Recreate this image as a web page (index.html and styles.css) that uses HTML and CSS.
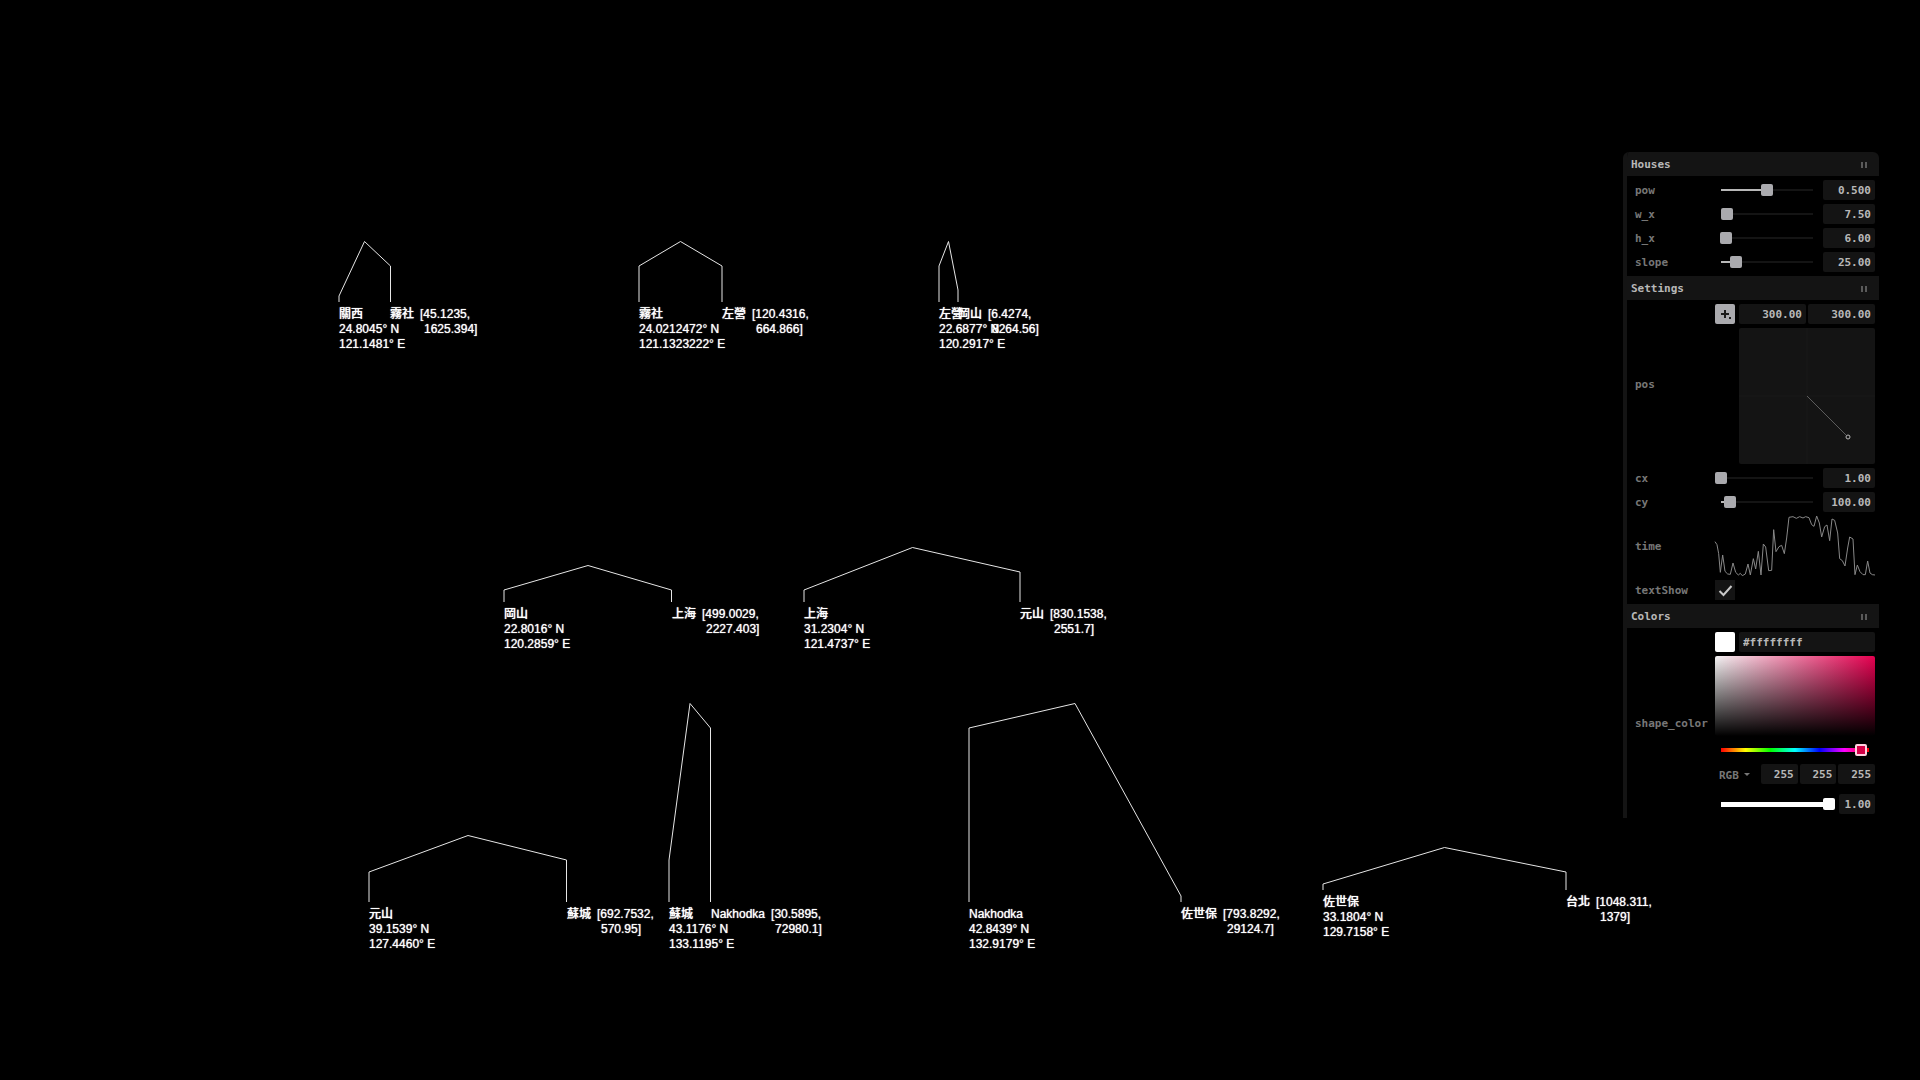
FILE: index.html
```html
<!DOCTYPE html>
<html lang="zh-Hant">
<head>
<meta charset="utf-8">
<title>Houses</title>
<meta name="viewport" content="width=device-width, initial-scale=1">
<link rel="stylesheet" href="styles.css">
</head>
<body>
<main class="stage">
  <section class="house" style="--x:339px;--y:302px;--span:51px">
    <svg class="outline"><polyline points="0,0 0,-6 25.5,-60.5 51.5,-36 51.5,0"/></svg>
    <p class="start">關西<br>24.8045° N<br>121.1481° E</p>
    <div class="end"><span>霧社</span><span class="size">[45.1235,<br>1625.394]</span></div>
  </section>
  <section class="house" style="--x:639px;--y:302px;--span:83px">
    <svg class="outline"><polyline points="0,0 0,-36 41.5,-60.5 83,-36 83,0"/></svg>
    <p class="start">霧社<br>24.0212472° N<br>121.1323222° E</p>
    <div class="end"><span>左營</span><span class="size">[120.4316,<br>664.866]</span></div>
  </section>
  <section class="house" style="--x:939px;--y:302px;--span:19px">
    <svg class="outline"><polyline points="0,0 0,-36 9.5,-60.5 19,-12 19,0"/></svg>
    <p class="start">左營<br>22.6877° N<br>120.2917° E</p>
    <div class="end"><span>岡山</span><span class="size">[6.4274,<br>8264.56]</span></div>
  </section>
  <section class="house" style="--x:504px;--y:602px;--span:168px">
    <svg class="outline"><polyline points="0,0 0,-12 84,-36.5 167.5,-12 167.5,0"/></svg>
    <p class="start">岡山<br>22.8016° N<br>120.2859° E</p>
    <div class="end"><span>上海</span><span class="size">[499.0029,<br>2227.403]</span></div>
  </section>
  <section class="house" style="--x:804px;--y:602px;--span:216px">
    <svg class="outline"><polyline points="0,0 0,-12 108.5,-54.5 216,-30 216,0"/></svg>
    <p class="start">上海<br>31.2304° N<br>121.4737° E</p>
    <div class="end"><span>元山</span><span class="size">[830.1538,<br>2551.7]</span></div>
  </section>
  <section class="house" style="--x:369px;--y:902px;--span:198px">
    <svg class="outline"><polyline points="0,0 0,-30 99,-66.5 197.5,-42 197.5,0"/></svg>
    <p class="start">元山<br>39.1539° N<br>127.4460° E</p>
    <div class="end"><span>蘇城</span><span class="size">[692.7532,<br>570.95]</span></div>
  </section>
  <section class="house" style="--x:669px;--y:902px;--span:42px">
    <svg class="outline"><polyline points="0,0 0,-42 21,-198.5 41.5,-174 41.5,0"/></svg>
    <p class="start">蘇城<br>43.1176° N<br>133.1195° E</p>
    <div class="end"><span>Nakhodka</span><span class="size">[30.5895,<br>72980.1]</span></div>
  </section>
  <section class="house" style="--x:969px;--y:902px;--span:212px">
    <svg class="outline"><polyline points="0,0 0,-174 106,-198.5 212,-6 212,0"/></svg>
    <p class="start">Nakhodka<br>42.8439° N<br>132.9179° E</p>
    <div class="end"><span>佐世保</span><span class="size">[793.8292,<br>29124.7]</span></div>
  </section>
  <section class="house" style="--x:1323px;--y:890px;--span:243px">
    <svg class="outline"><polyline points="0,0 0,-6 121.5,-42.5 243,-18 243,0"/></svg>
    <p class="start">佐世保<br>33.1804° N<br>129.7158° E</p>
    <div class="end"><span>台北</span><span class="size">[1048.311,<br>1379]</span></div>
  </section>

  <aside class="panel">
    <button class="folder" type="button"><span>Houses</span><i class="mark"></i></button>
    <div class="rows">
      <div class="row"><label for="pow">pow</label>
        <div class="control"><input id="pow" class="slider" type="range" min="0" max="92" value="46" style="--fill:46px"><input class="field" type="text" aria-label="pow value" value="0.500"></div></div>
      <div class="row"><label for="w_x">w_x</label>
        <div class="control"><input id="w_x" class="slider" type="range" min="0" max="92" value="6" style="--fill:6px"><input class="field" type="text" aria-label="w_x value" value="7.50"></div></div>
      <div class="row"><label for="h_x">h_x</label>
        <div class="control"><input id="h_x" class="slider" type="range" min="0" max="92" value="5" style="--fill:5px"><input class="field" type="text" aria-label="h_x value" value="6.00"></div></div>
      <div class="row"><label for="slope">slope</label>
        <div class="control"><input id="slope" class="slider" type="range" min="0" max="92" value="15" style="--fill:15px"><input class="field" type="text" aria-label="slope value" value="25.00"></div></div>
    </div>

    <button class="folder" type="button"><span>Settings</span><i class="mark"></i></button>
    <div class="rows">
      <div class="row"><label for="pos-x">pos</label>
        <div class="stack">
          <div class="control">
            <button class="picker" type="button" aria-label="Toggle position pad">
              <svg width="20" height="20" viewBox="0 0 20 20"><path d="M10 6v8M6 10h8" stroke="#1a1a1a" stroke-width="2" fill="none"/><path d="M14 13h2v2h-2z" fill="#1a1a1a"/></svg>
            </button>
            <div class="fields"><input id="pos-x" class="field" type="text" value="300.00"><input class="field" type="text" aria-label="pos y" value="300.00"></div>
          </div>
          <svg class="pad" viewBox="0 0 136 136"><path d="M0 68h136M68 0v136" stroke="#191919"/><path d="M68 68l39 39" stroke="#5c5c5c"/><circle cx="109" cy="109" r="2" fill="none" stroke="#b8b8b8"/></svg>
        </div>
      </div>
      <div class="row"><label for="cx">cx</label>
        <div class="control"><input id="cx" class="slider" type="range" min="0" max="92" value="0" style="--fill:0px"><input class="field" type="text" aria-label="cx value" value="1.00"></div></div>
      <div class="row"><label for="cy">cy</label>
        <div class="control"><input id="cy" class="slider" type="range" min="0" max="92" value="9" style="--fill:9px"><input class="field" type="text" aria-label="cy value" value="100.00"></div></div>
      <div class="row"><span class="name">time</span>
        <svg class="graph" viewBox="316 169 480 180" preserveAspectRatio="none"><polyline points="316,246 322,255 327,282 332,338 339,286 346,335 354,343 362,344 370,310 378,338 386,346 392,341 398,348 407,343 415,313 422,346 431,297 438,328 446,275 454,346 461,253 468,262 477,333 486,332 492,210 499,276 508,261 516,257 524,282 531,235 538,173 550,171 560,176 570,171 580,175 588,171 598,174 606,195 613,200 621,169 629,190 636,232 645,201 652,196 660,243 667,178 675,182 684,220 690,297 698,303 706,319 714,265 720,232 730,238 736,345 743,316 751,336 760,345 767,345 774,304 781,340 788,345 796,346"/></svg></div>
      <div class="row"><label for="textShow">textShow</label>
        <div class="tick"><input id="textShow" type="checkbox" checked><svg width="20" height="20" viewBox="0 0 20 20"><path d="M4.500 11l4 4 8-9" fill="none" stroke="#c8c8c8" stroke-width="2"/></svg></div></div>
    </div>

    <button class="folder" type="button"><span>Colors</span><i class="mark"></i></button>
    <div class="rows">
      <div class="row"><label for="hex">shape_color</label>
        <div class="stack">
          <div class="control"><button class="swatch" type="button" aria-label="Colour picker"></button><input id="hex" class="field hex" type="text" value="#ffffffff"></div>
          <div class="palette"></div>
          <input class="slider hue" type="range" min="0" max="360" value="340" aria-label="Hue">
          <div class="control">
            <div class="mode"><select aria-label="Colour mode"><option>RGB</option><option>HSL</option></select><svg width="6" height="3" viewBox="0 0 6 3"><path d="M0 0h6l-3 3z" fill="#777"/></svg></div>
            <div class="fields"><input class="field" type="text" aria-label="Red" value="255"><input class="field" type="text" aria-label="Green" value="255"><input class="field" type="text" aria-label="Blue" value="255"></div>
          </div>
          <div class="control alpha-row"><input class="slider alpha" type="range" min="0" max="100" value="100" aria-label="Alpha"><input class="field alpha-value" type="text" aria-label="Alpha value" value="1.00"></div>
        </div>
      </div>
    </div>
  </aside>
</main>
</body>
</html>
```
FILE: styles.css
```css
* { box-sizing: border-box; }

body {
  margin: 0;
  background: #000;
  color: #fff;
}

.stage {
  position: relative;
  min-height: 100vh;
  overflow: hidden;
  font: 500 12px/15px "Liberation Sans", "Noto Sans CJK TC", sans-serif;
}

/* Houses: each one is anchored at its left foot on the ground line */
.house {
  position: absolute;
  left: var(--x);
  top: var(--y);
  text-shadow: 0 0 1px #fff;
}

.outline {
  display: block;
  width: 1px;
  height: 5px;
  overflow: visible;
  fill: none;
  stroke: #e6e6e6;
}

.start {
  margin: 0;
  white-space: nowrap;
}

.end {
  position: absolute;
  left: var(--span);
  top: 5px;
  display: flex;
  gap: 6px;
  white-space: nowrap;
}

.size {
  padding-left: 4px;
  text-indent: -4px;
}

/* Control panel */
.panel {
  position: absolute;
  top: 152px;
  right: 41px;
  width: 256px;
  border-left: 4px solid #141414;
  border-radius: 6px 6px 0 0;
  overflow: hidden;
  background: #000;
  color: #b8b8b8;
  font: bold 11px/20px "DejaVu Sans Mono", monospace;
}

.panel button,
.panel input,
.panel select {
  margin: 0;
  border: 0;
  border-radius: 0;
  font: inherit;
  color: inherit;
  outline: 0;
}

.panel .folder {
  display: flex;
  align-items: center;
  justify-content: space-between;
  width: 100%;
  height: 24px;
  padding: 2px 12px 0 4px;
  background: #141414;
}

.mark {
  width: 6px;
  height: 6px;
  border: solid #5a5a5a;
  border-width: 0 2px;
}

.rows {
  display: flex;
  flex-direction: column;
  gap: 4px;
  padding: 4px 4px 4px 8px;
}

.row {
  display: grid;
  grid-template-columns: 1fr 160px;
  align-items: center;
}

.row > label,
.name {
  height: 20px;
  line-height: 22px;
  color: #777;
}

.stack {
  display: flex;
  flex-direction: column;
  gap: 4px;
}

.control {
  display: flex;
  gap: 4px;
}

.panel .field {
  flex: 0 0 52px;
  min-width: 0;
  height: 20px;
  padding: 2px 4px 0;
  background: #141414;
  border-radius: 2px;
  text-align: right;
}

.fields {
  display: flex;
  flex: 1;
  gap: 2px;
}

.panel .fields .field { flex: 1 1 0; width: 0; }

.panel .hex { flex: 1; text-align: left; }

.slider {
  flex: 1;
  min-width: 0;
  height: 20px;
  appearance: none;
  background:
    linear-gradient(#b8b8b8, #b8b8b8) 6px center / var(--fill) 2px no-repeat,
    linear-gradient(#141414, #141414) center / calc(100% - 12px) 2px no-repeat;
}

.slider::-webkit-slider-thumb {
  appearance: none;
  width: 12px;
  height: 12px;
  border-radius: 2px;
  background: #aaaaae;
}

.panel .picker,
.panel .swatch {
  flex: 0 0 20px;
  height: 20px;
  padding: 0;
  border-radius: 2px;
  background: #aaaaae;
}

.panel .swatch { background: #fff; }

.picker svg { display: block; }

.pad {
  align-self: flex-end;
  width: 136px;
  height: 136px;
  background: #141414;
  border-radius: 2px;
}

.graph {
  width: 160px;
  height: 60px;
  overflow: visible;
  fill: none;
  stroke: #888;
}

.graph polyline { vector-effect: non-scaling-stroke; }

.tick {
  display: grid;
  width: 20px;
  height: 20px;
}

.tick > * { grid-area: 1 / 1; }

.tick input {
  appearance: none;
  background: #141414;
}

.tick svg { pointer-events: none; z-index: 1; }

.palette {
  height: 80px;
  border-radius: 2px;
  background:
    linear-gradient(to top, #000, transparent),
    linear-gradient(to right, #f4f4f4, #e60050);
}

.slider.hue {
  flex: none;
  width: 100%;
  background: linear-gradient(to right, #f00, #ff0, #0f0, #0ff, #00f, #f0f, #f00) center / calc(100% - 12px) 4px no-repeat;
}

.hue::-webkit-slider-thumb {
  border: 2px solid #ffd0e0;
  background: #d40046;
}

.mode {
  display: flex;
  align-items: center;
  gap: 5px;
  width: 42px;
  padding-left: 4px;
  color: #777;
}

.panel select {
  width: 20px;
  height: 20px;
  padding: 2px 0 0;
  appearance: none;
  background: none;
}

.alpha-row { padding-top: 6px; }

.slider.alpha {
  border-radius: 2px;
  background: linear-gradient(#fff, #fff) center / calc(100% - 12px) 5px no-repeat;
}

.alpha::-webkit-slider-thumb { background: #fff; }

.panel .alpha-value { flex-basis: 36px; }
```
